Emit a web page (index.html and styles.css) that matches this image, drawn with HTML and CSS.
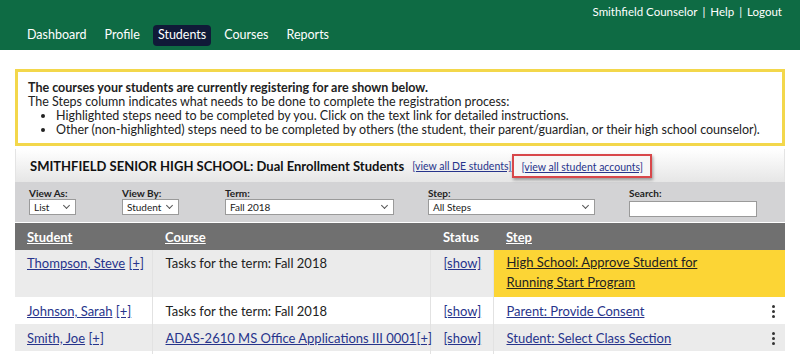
FILE: index.html
```html
<!DOCTYPE html>
<html lang="en">
<head>
  <meta charset="UTF-8">
  <title>Students - Dual Enrollment</title>
  <link rel="stylesheet" href="styles.css">
</head>
<body>
  <div class="topbar">
    <div class="user-links">
      <span>Smithfield Counselor</span><span class="sep">|</span><a href="#">Help</a><span class="sep">|</span><a href="#">Logout</a>
    </div>
    <nav class="nav">
      <a href="#">Dashboard</a>
      <a href="#">Profile</a>
      <a href="#" class="active">Students</a>
      <a href="#">Courses</a>
      <a href="#">Reports</a>
    </nav>
  </div>

  <div class="notice">
    <p class="notice-title">The courses your students are currently registering for are shown below.</p>
    <p>The Steps column indicates what needs to be done to complete the registration process:</p>
    <ul>
      <li>Highlighted steps need to be completed by you. Click on the text link for detailed instructions.</li>
      <li>Other (non-highlighted) steps need to be completed by others (the student, their parent/guardian, or their high school counselor).</li>
    </ul>
  </div>

  <div class="panel">
    <div class="panel-title">
      <h2>SMITHFIELD SENIOR HIGH SCHOOL: Dual Enrollment Students</h2>
      <a href="#" class="small-link">[view all DE students]</a>
      <span class="callout"><a href="#" class="small-link">[view all student accounts]</a></span>
    </div>

    <div class="filters">
      <div class="field f-viewas">
        <label>View As:</label>
        <div class="select">List</div>
      </div>
      <div class="field f-viewby">
        <label>View By:</label>
        <div class="select">Student</div>
      </div>
      <div class="field f-term">
        <label>Term:</label>
        <div class="select">Fall 2018</div>
      </div>
      <div class="field f-step">
        <label>Step:</label>
        <div class="select">All Steps</div>
      </div>
      <div class="field f-search">
        <label>Search:</label>
        <input type="text">
      </div>
    </div>

    <table class="grid">
      <colgroup>
        <col class="w-student">
        <col class="w-course">
        <col class="w-status">
        <col>
      </colgroup>
      <thead>
        <tr>
          <th><a href="#">Student</a></th>
          <th><a href="#">Course</a></th>
          <th>Status</th>
          <th><a href="#">Step</a></th>
        </tr>
      </thead>
      <tbody>
        <tr class="alt tall">
          <td><a href="#">Thompson, Steve</a> <a href="#">[+]</a></td>
          <td>Tasks for the term: Fall 2018</td>
          <td><a href="#">[show]</a></td>
          <td class="highlight"><a href="#">High School: Approve Student for<br>Running Start Program</a></td>
        </tr>
        <tr>
          <td><a href="#">Johnson, Sarah</a> <a href="#">[+]</a></td>
          <td>Tasks for the term: Fall 2018</td>
          <td><a href="#">[show]</a></td>
          <td class="step"><a href="#">Parent: Provide Consent</a><span class="kebab"><i></i><i></i><i></i></span></td>
        </tr>
        <tr class="alt">
          <td><a href="#">Smith, Joe</a> <a href="#">[+]</a></td>
          <td><a href="#">ADAS-2610 MS Office Applications III 0001</a><a href="#">[+]</a></td>
          <td><a href="#">[show]</a></td>
          <td class="step"><a href="#">Student: Select Class Section</a><span class="kebab"><i></i><i></i><i></i></span></td>
        </tr>
        <tr>
          <td></td>
          <td></td>
          <td></td>
          <td></td>
        </tr>
      </tbody>
    </table>
  </div>
</body>
</html>
```

FILE: styles.css
```css
body {
  margin: 0;
  font-family: Lato, "Liberation Sans", sans-serif;
  font-size: 13px;
  color: #222;
  background: #fff;
  overflow: hidden;
}

a {
  color: #27348b;
}

.topbar {
  background: #0e6b44;
  height: 50px;
  position: relative;
}

.user-links {
  position: absolute;
  top: 5px;
  right: 18px;
  color: #fff;
  font-size: 11.5px;
}

.user-links .sep {
  margin: 0 5px;
}

.user-links a {
  color: #fff;
  text-decoration: none;
}

.nav {
  display: flex;
  padding: 25px 0 0 22px;
}

.nav a {
  color: #fff;
  text-decoration: none;
  padding: 2px 5px 4px;
  border-radius: 4px;
  font-size: 12.5px;
  margin-right: 8px;
}

.nav a.active {
  background: #101a38;
}

.notice {
  margin: 19px 15px 0 15px;
  border: 3px solid #f3d74b;
  padding: 9px 10px 6px;
  font-size: 12.5px;
  line-height: 14px;
}

.notice p {
  margin: 0;
}

.notice-title {
  font-weight: bold;
}

.notice ul {
  margin: 0;
  padding-left: 28px;
}

.panel {
  margin: 3px 15px 0 15px;
}

.panel-title {
  display: flex;
  align-items: center;
  height: 33px;
  padding-left: 14px;
  background: linear-gradient(#ffffff, #e6e6e6);
  border-left: 1px solid #e4e4e4;
  border-right: 1px solid #e4e4e4;
}

.panel-title h2 {
  margin: 0 8px 0 0;
  font-size: 13px;
  font-weight: bold;
  color: #111;
}

.small-link {
  font-size: 10.5px;
}

.callout {
  margin-left: 1px;
  padding: 2px 7px;
  border: 2px solid #d8474a;
  box-shadow: 1px 2px 3px rgba(0, 0, 0, 0.35);
  background: #f6f6f6;
}

.filters {
  display: flex;
  background: #d3d3d5;
  height: 40px;
  padding: 6px 0 0 14px;
  box-sizing: border-box;
}

.field label {
  display: block;
  font-size: 10px;
  font-weight: bold;
  color: #222;
  line-height: 11px;
}

.select,
.field input {
  box-sizing: border-box;
  height: 16px;
  background: #fff;
  border: 1px solid #9a9a9a;
  font-size: 10px;
  line-height: 14px;
  padding: 0 4px;
  position: relative;
}

.select::after {
  content: "";
  position: absolute;
  right: 6px;
  top: 3px;
  width: 4px;
  height: 4px;
  border-right: 1px solid #555;
  border-bottom: 1px solid #555;
  transform: rotate(45deg);
}

.f-viewas { width: 93px; }
.f-viewas .select { width: 47px; }
.f-viewby { width: 103px; }
.f-viewby .select { width: 57px; }
.f-term { width: 203px; }
.f-term .select { width: 169px; }
.f-step { width: 201px; }
.f-step .select { width: 167px; }
.f-search input { width: 128px; }

.grid {
  width: 100%;
  table-layout: fixed;
  border-collapse: collapse;
  margin-top: 1px;
  font-size: 13px;
}

.w-student { width: 137px; }
.w-course { width: 278px; }
.w-status { width: 63px; }

.grid th {
  background: #707070;
  color: #fff;
  font-weight: bold;
  text-align: left;
  height: 27px;
  padding: 0 13px;
}

.grid th:first-child,
.grid td:first-child {
  padding-left: 12px;
}

.grid th a {
  color: #fff;
}

.grid td {
  height: 27px;
  padding: 0 13px;
  border-left: 1px solid #e2e2e2;
  vertical-align: middle;
  white-space: nowrap;
}

.grid td:first-child {
  border-left: none;
}

.grid tr.alt td {
  background: #ebebeb;
}

.grid tr.tall td {
  height: 42px;
  vertical-align: top;
  padding-top: 5px;
}

.grid tr.tall td.highlight {
  background: #fcd535;
  line-height: 20px;
  padding-top: 2px;
}

.highlight a {
  color: #222;
}

.step {
  position: relative;
}

.kebab {
  position: absolute;
  right: 10px;
  top: 8px;
  display: flex;
  flex-direction: column;
  gap: 2px;
}

.kebab i {
  width: 3px;
  height: 3px;
  background: #333;
  border-radius: 50%;
}
```
